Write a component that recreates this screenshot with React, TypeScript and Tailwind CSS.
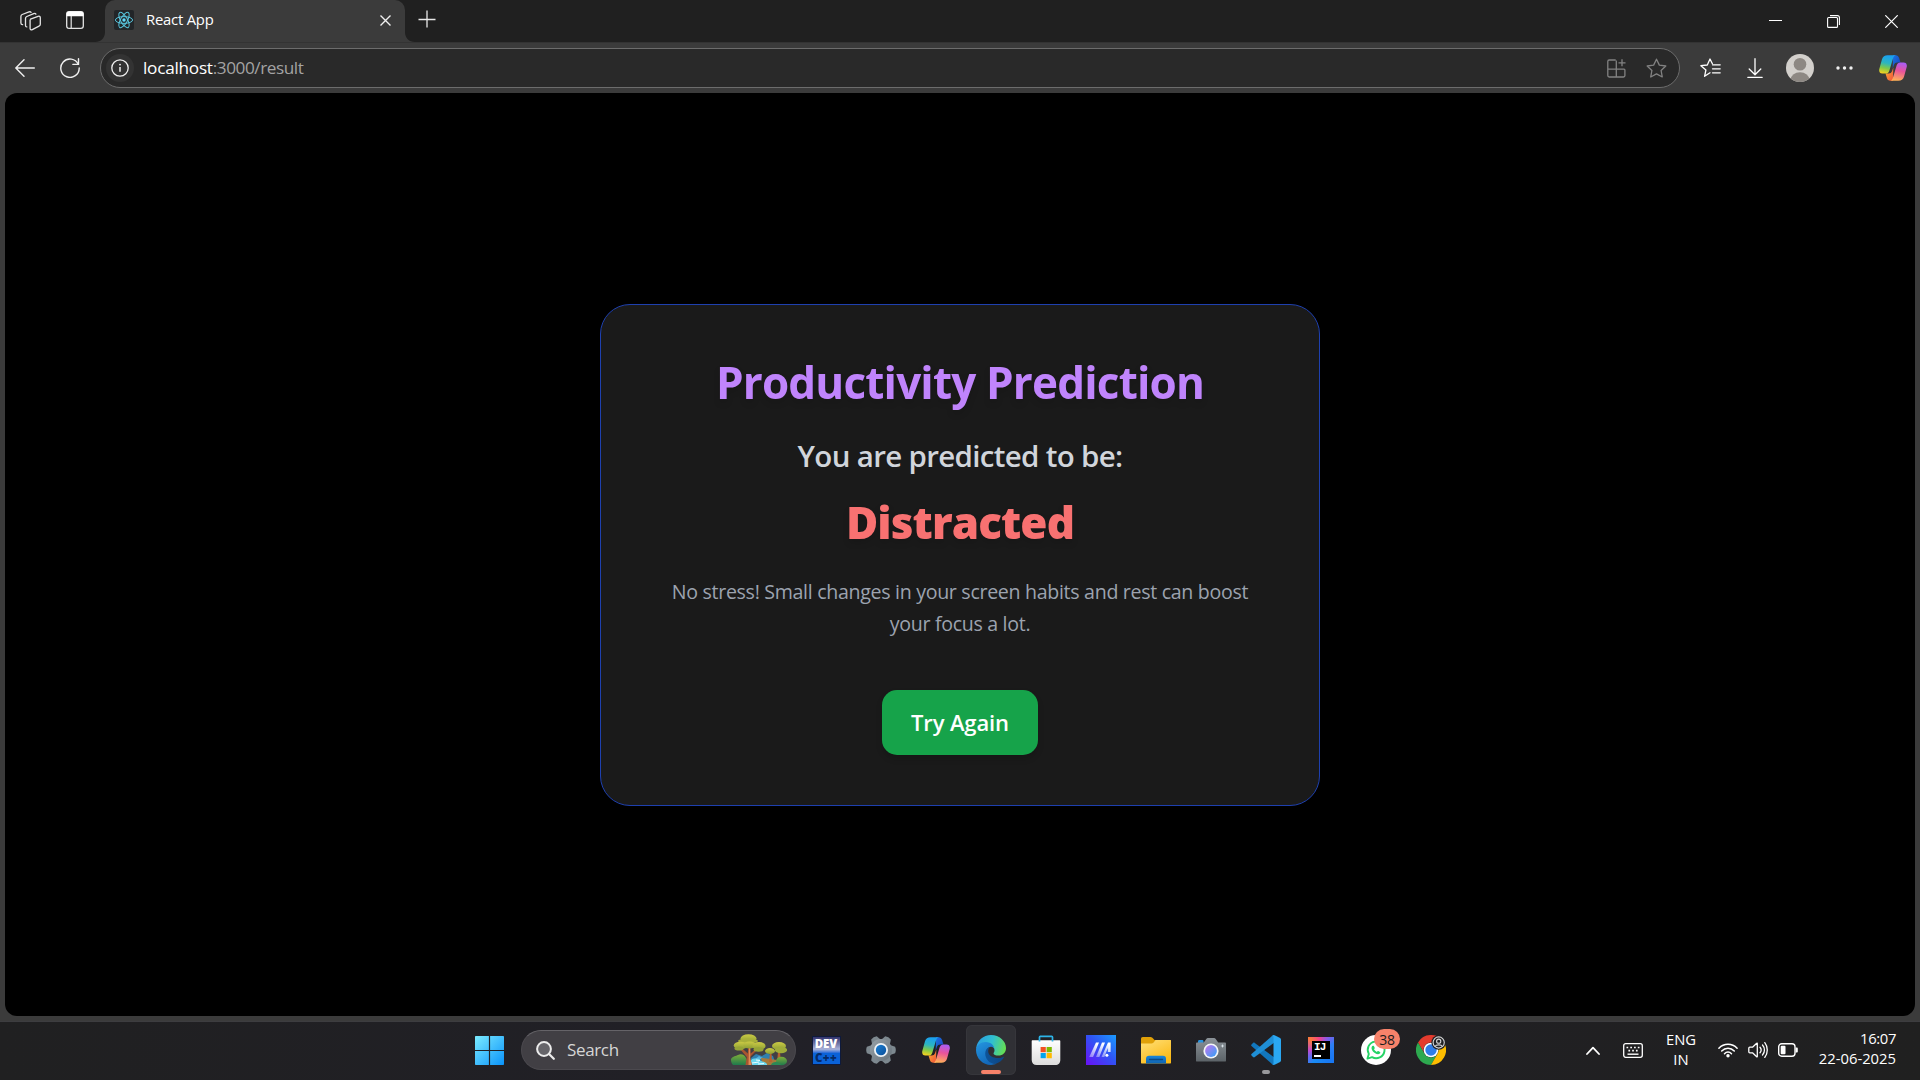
import React, { type ReactNode } from 'react';

/* ---------- Shared logos ---------- */

function CopilotLogo({ id, className }: { id: string; className: string }) {
  return (
    <svg viewBox="0 0 28 26" className={className}>
      <defs>
        <linearGradient id={`${id}-a`} x1="0.4" y1="0" x2="0.2" y2="1">
          <stop offset="0" stopColor="#1aa0f0" />
          <stop offset="0.4" stopColor="#2cb5c0" />
          <stop offset="0.68" stopColor="#7fc94a" />
          <stop offset="1" stopColor="#ffd21c" />
        </linearGradient>
        <linearGradient id={`${id}-b`} x1="0.6" y1="0" x2="0.4" y2="1">
          <stop offset="0" stopColor="#a95cf5" />
          <stop offset="0.45" stopColor="#e9539b" />
          <stop offset="1" stopColor="#ffb257" />
        </linearGradient>
        <linearGradient id={`${id}-c`} x1="0" y1="0" x2="1" y2="1">
          <stop offset="0" stopColor="#1b74e4" />
          <stop offset="1" stopColor="#173fb5" />
        </linearGradient>
        <linearGradient id={`${id}-d`} x1="0" y1="0" x2="1" y2="1">
          <stop offset="0" stopColor="#ffb02e" />
          <stop offset="1" stopColor="#f0523d" />
        </linearGradient>
      </defs>
      <path d="M14 .3h2.6c1.900 0 3 1.100 3.500 2.800l1.400 4.300h-3.200c-1.700 0-2.800.8-3.400 2.500l-1.200 3.600z" fill={`url(#${id}-c)`} />
      <path d="M14 25.700h-2.600c-1.900 0-3-1.100-3.500-2.800l-1.400-4.300h3.200c1.700 0 2.800-.8 3.400-2.500l1.200-3.600z" fill={`url(#${id}-d)`} />
      <path d="M8.600.3h8.200c-1.400.3-2.200 1.400-2.800 3.300l-3.700 12.100c-.6 1.900-1.700 2.900-3.700 2.900H3.400C.9 18.600-.3 16.800.3 14L3 4.200C3.800 1.600 5.700.3 8.600.3z" fill={`url(#${id}-a)`} />
      <path d="M19.400 25.700h-8.200c1.400-.3 2.200-1.400 2.800-3.300l3.700-12.100c.6-1.900 1.700-2.900 3.700-2.900h3.200c2.500 0 3.700 1.800 3.100 4.600L25 21.800c-.8 2.600-2.700 3.900-5.600 3.900z" fill={`url(#${id}-b)`} />
    </svg>
  );
}

/* ---------- Browser chrome ---------- */

function ReactFavicon() {
  return (
    <svg viewBox="0 0 20 20" className="size-5">
      <rect width="20" height="20" rx="2" fill="#222528" />
      <g fill="none" stroke="#58c4dc" strokeWidth="1">
        <ellipse cx="10" cy="10" rx="8.600" ry="3.400" />
        <ellipse cx="10" cy="10" rx="8.600" ry="3.400" transform="rotate(60 10 10)" />
        <ellipse cx="10" cy="10" rx="8.600" ry="3.400" transform="rotate(120 10 10)" />
      </g>
      <circle cx="10" cy="10" r="1.700" fill="#61dafb" />
    </svg>
  );
}

function TabStrip() {
  return (
    <div className="flex h-[42px] items-start bg-[#202020]">
      <svg viewBox="0 0 22 20" className="ml-5 mt-[10.500px] h-5 w-[22px]" fill="none" stroke="#e4e4e4" strokeWidth="1.300" strokeLinejoin="round" strokeLinecap="round">
        <path d="M10.500 8.100 18 5.300c1.300-.5 2.300.1 2.300 1.400v6.600c0 .9-.5 1.600-1.300 1.900l-6.700 3.400c-1.200.6-2.200 0-2.200-1.200V8.900" />
        <path d="M6.800 15.900c-.9 0-1.300-.6-1.300-1.500V7.500c0-.9.500-1.600 1.300-2l6.900-2.900c.9-.4 1.800-.2 2.200.5" />
        <path d="M2.600 13.600C1.400 13.500.9 12.900.9 11.900V5.500c0-.9.5-1.600 1.300-2L9 .9c.9-.3 1.700-.1 2.100.4" />
      </svg>
      <svg viewBox="0 0 18 18" className="ml-6 mt-[11px] size-[18px]">
        <rect x="0.700" y="0.700" width="16.600" height="16.600" rx="2.400" fill="none" stroke="#e4e4e4" strokeWidth="1.300" />
        <path d="M.5 5.200V3C.5 1.500 1.500.5 3 .5h12c1.500 0 2.500 1 2.500 2.500v2.200z" fill="#fff" />
        <path d="M5.200 5v12.300" stroke="#e4e4e4" strokeWidth="1.200" />
      </svg>
      <svg viewBox="0 0 10 10" className="ml-[11px] mt-8 size-2.5">
        <path d="M10 0v10H0C6 10 10 6 10 0z" fill="#3b3b3b" />
      </svg>
      <div className="flex h-[42px] w-[300px] items-start rounded-t-[10px] bg-[#3b3b3b]">
        <div className="ml-[9px] mt-2.5">
          <ReactFavicon />
        </div>
        <span className="ml-[12px] mt-[9px] w-[234px] text-[14.800px] leading-5 tracking-[-0.200px] text-white">React App</span>
        <svg viewBox="0 0 11 11" className="mt-[15px] size-[11px]" stroke="#f0f0f0" strokeWidth="1.400">
          <path d="M.5.500l10 10M10.500.500l-10 10" />
        </svg>
      </div>
      <svg viewBox="0 0 10 10" className="mt-8 size-2.5">
        <path d="M0 0v10h10C4 10 0 6 0 0z" fill="#3b3b3b" />
      </svg>
      <svg viewBox="0 0 18 18" className="ml-[3px] mt-2.5 size-[18px]" stroke="#e8e8e8" strokeWidth="1.300">
        <path d="M9 .5v17M.5 9.500h17" />
      </svg>
      <div className="ml-auto mr-[22px] flex">
        <svg viewBox="0 0 13 13" className="mt-[14px] size-[13px]" stroke="#fff">
          <path d="M0 6.500h13" />
        </svg>
        <svg viewBox="0 0 13 13" className="ml-[45px] mt-[15px] size-[13px]" fill="none" stroke="#fff" strokeWidth="1.100">
          <rect x="0.600" y="2.500" width="9.900" height="9.900" rx="1" />
          <path d="M3 .6h7.400c1.200 0 2 .8 2 2V10" />
        </svg>
        <svg viewBox="0 0 13 13" className="ml-[45px] mt-[15px] size-[13px]" stroke="#fff" strokeWidth="1.200">
          <path d="M.3.300l12.400 12.400M12.700.3.300 12.700" />
        </svg>
      </div>
    </div>
  );
}

const STAR = 'M10.500 1.200l2.850 5.900 6.450.9-4.700 4.500 1.150 6.450-5.750-3.050-5.750 3.050 1.150-6.450L1.200 8l6.450-.9z';

function Toolbar() {
  return (
    <div className="flex h-[51px] items-center bg-[#3b3b3b] shadow-[inset_0_1px_0_#333333]">
      <svg viewBox="0 0 20 18" className="ml-[15px] h-[18px] w-5" fill="none" stroke="#f0f0f0" strokeWidth="1.400" strokeLinecap="round" strokeLinejoin="round">
        <path d="M19.300 9H1M9 .8.800 9 9 17.200" />
      </svg>
      <svg viewBox="0 0 20 20" className="ml-[25px] size-5" fill="none" stroke="#f0f0f0" strokeWidth="1.400" strokeLinecap="round" strokeLinejoin="round">
        <path d="M18.300 6.200A9.200 9.200 0 1 0 19.200 10" />
        <path d="M18.500.8v5.600h-5.600" />
      </svg>
      <div className="ml-5 mt-px flex h-10 w-[1580px] items-center rounded-full border border-[#6c6c6c] bg-[#292929]">
        <div className="ml-[5px] flex size-7 items-center justify-center rounded-full bg-[#333333]">
          <svg viewBox="0 0 18 18" className="size-[18px]" fill="none" stroke="#f0f0f0" strokeWidth="1.300">
            <circle cx="9" cy="9" r="8.200" />
            <path d="M9 8v4.800" strokeWidth="1.500" />
            <circle cx="9" cy="5.600" r="0.950" fill="#f0f0f0" stroke="none" />
          </svg>
        </div>
        <span className="ml-[9px] whitespace-nowrap text-[17.200px] leading-6">
          <span className="tracking-[-0.250px] text-white">localhost</span>
          <span className="tracking-[-0.450px] text-[#a3a3a3]">:3000/result</span>
        </span>
        <svg viewBox="0 0 19 19" className="ml-auto size-[19px]" fill="none" stroke="#828282" strokeWidth="1.300">
          <path d="M8.700 1H2.200C1.300 1 .8 1.500.8 2.400v14.200c0 .9.500 1.400 1.400 1.400h14.300c.9 0 1.400-.5 1.400-1.400V11c0-.5-.4-.9-.9-.9H.8M9.300 17.900V1.600" />
          <path d="M15 .3v7M11.500 3.800h7" />
        </svg>
        <svg viewBox="0 0 21 21" className="ml-5 mr-3 size-[21px]" fill="none" stroke="#828282" strokeWidth="1.300" strokeLinejoin="round">
          <path d={STAR} />
        </svg>
      </div>
      <svg viewBox="0 0 21 20" className="ml-5 mt-px h-5 w-[21px]" fill="none" stroke="#fff" strokeWidth="1.300" strokeLinejoin="round" strokeLinecap="round">
        <path d="M10 14.800l-5.400 3.500 1.300-6.300L.9 7.700l6.400-.7L10 1l2.400 4.800" />
        <path d="M12.500 6.800h7.700M12.500 10.800h7.700M12.500 14.800h7.700" />
      </svg>
      <svg viewBox="0 0 16 20" className="ml-[26px] mt-px h-5 w-4" fill="none" stroke="#fff" strokeWidth="1.300" strokeLinejoin="round" strokeLinecap="round">
        <path d="M8 .7v15.500M2.200 11 8 16.700l5.800-5.700M.8 19.300h14.400" />
      </svg>
      <svg viewBox="0 0 28 28" className="ml-[23px] mt-px size-7">
        <defs>
          <clipPath id="avatar-clip"><circle cx="14" cy="14" r="14" /></clipPath>
        </defs>
        <g clipPath="url(#avatar-clip)">
          <rect width="28" height="28" fill="#d3d0cc" />
          <circle cx="14" cy="10.300" r="6.300" fill="#8d8883" />
          <ellipse cx="14" cy="26" rx="9.500" ry="7.800" fill="#8d8883" />
        </g>
      </svg>
      <svg viewBox="0 0 17 4" className="ml-[22px] mt-px h-1 w-[17px]" fill="#f0f0f0">
        <circle cx="2" cy="2" r="1.700" />
        <circle cx="8.500" cy="2" r="1.700" />
        <circle cx="15" cy="2" r="1.700" />
      </svg>
      <CopilotLogo id="toolbar-copilot" className="ml-[25.500px] mt-px h-[26px] w-7" />
    </div>
  );
}

/* ---------- Result page ---------- */

function ResultCard() {
  return (
    <main className="flex h-[502px] w-[720px] flex-col items-center rounded-[30px] border border-[#1e40af] bg-[#1a1a1a] pt-[52px] text-center">
      <h1 className="text-[44px] font-bold leading-[50px] tracking-[-0.820px] text-[#c084fc] drop-shadow-[0_4px_3px_rgba(0,0,0,0.12)]">
        Productivity Prediction
      </h1>
      <p className="mt-[29px] text-[29.500px] font-semibold leading-10 tracking-[-0.680px] text-[#d1d5db]">You are predicted to be:</p>
      <p className="mt-[21px] text-[44px] font-extrabold leading-[50px] tracking-[-0.900px] text-[#f87171] drop-shadow-[0_4px_3px_rgba(0,0,0,0.12)]">
        Distracted
      </p>
      <p className="mt-[29px] w-[620px] text-[19.600px] leading-8 tracking-[-0.310px] text-[#9ca3af]">
        No stress! Small changes in your screen habits and rest can boost
        <br />
        your focus a lot.
      </p>
      <button className="mt-[50px] h-[65px] w-[156px] rounded-[15px] bg-[#16a34a] text-[22px] font-semibold tracking-[-0.130px] text-white shadow-[0_4px_6px_rgba(0,0,0,0.15)]">
        Try Again
      </button>
    </main>
  );
}

/* ---------- Taskbar icons ---------- */

function TreesArt() {
  return (
    <svg viewBox="0 0 56 32" className="h-8 w-14">
      <defs>
        <linearGradient id="leaf" x1="0" y1="0" x2="0" y2="1">
          <stop offset="0" stopColor="#cbca44" />
          <stop offset="1" stopColor="#8d9f35" />
        </linearGradient>
        <linearGradient id="bush" x1="0" y1="0" x2="0" y2="1">
          <stop offset="0" stopColor="#7fae3a" />
          <stop offset="1" stopColor="#1f7a4c" />
        </linearGradient>
      </defs>
      <path d="M20 24l5-4 6 2 5-3 6 3 2 6H20z" fill="#2f7fae" />
      <path d="M24 25l4-3 6 3z" fill="#56b0dc" />
      <path d="M30 24c6 0 14 2 24 3l-4 4H32z" fill="#a4793b" />
      <path d="M0 25c2-3 5-3 7-4 3-2 7 0 8 3l3 7H2c-2-2-2-4-2-6z" fill="url(#bush)" />
      <path d="M17 31l4-6c5-1 9 0 8 1-2 1 8 2 7 5z" fill="#6cd8ee" />
      <path d="M21 29l7-1M25 26l4 .5M27 30l6-.5" stroke="#e8fbff" strokeWidth="1" />
      <path d="M14.500 31l1.300-8-6-7 2-1 5 4.500.5-8h2l.2 8 5-4 1 1-6.500 6.500 2 8z" fill="#a9552f" />
      <path d="M17.500 31l.5-18h1.200v11l1 7z" fill="#e08a55" />
      <ellipse cx="17.500" cy="4.500" rx="8" ry="4.300" fill="url(#leaf)" />
      <ellipse cx="17" cy="7" rx="10" ry="2.600" fill="#a8b03a" />
      <ellipse cx="9.500" cy="11.500" rx="6.800" ry="3.800" fill="url(#leaf)" />
      <ellipse cx="18.500" cy="11" rx="6.500" ry="3.400" fill="url(#leaf)" />
      <ellipse cx="28" cy="12" rx="6.600" ry="3.900" fill="url(#leaf)" />
      <ellipse cx="8" cy="14.500" rx="4.500" ry="2" fill="#96a437" />
      <ellipse cx="27.500" cy="15.500" rx="5" ry="2.200" fill="#96a437" />
      <path d="M46 29l1-11h2l1 11zM38 28l1-9h1.500l.5 9z" fill="#b5632f" />
      <ellipse cx="48" cy="12" rx="7" ry="4" fill="url(#leaf)" />
      <ellipse cx="50" cy="16" rx="6.200" ry="3.200" fill="#a1ad3a" />
      <ellipse cx="39" cy="17" rx="5" ry="3" fill="url(#leaf)" />
      <ellipse cx="50.500" cy="27" rx="5.500" ry="4.300" fill="url(#bush)" />
      <path d="M40 31c1-3 5-4 8-2l2 2z" fill="#2a8a57" />
    </svg>
  );
}

function DevCppIcon() {
  return (
    <div className="flex size-[29px] flex-col items-center justify-between overflow-hidden border border-[#0e1a3c] bg-linear-to-b from-[#34346e] via-[#a9b2d8] via-45% to-[#0a62d8] to-60% font-extrabold">
      <span className="text-[11.500px] leading-[13px] tracking-[-0.100px] text-white">DEV</span>
      <span className="text-[11.500px] leading-[12px] tracking-[0.300px] text-[#062a66]">C++</span>
    </div>
  );
}

const GEAR_TEETH = [0, 60, 120, 180, 240, 300];

function SettingsIcon() {
  return (
    <svg viewBox="0 0 30 30" className="size-[30px]">
      <defs>
        <linearGradient id="gear" x1="0" y1="0" x2="1" y2="1">
          <stop offset="0" stopColor="#97a1a8" />
          <stop offset="1" stopColor="#67727a" />
        </linearGradient>
        <linearGradient id="gear-core" x1="0" y1="0" x2="1" y2="1">
          <stop offset="0" stopColor="#1b80d4" />
          <stop offset="1" stopColor="#0b4f9a" />
        </linearGradient>
      </defs>
      <g fill="#7d888f">
        {GEAR_TEETH.map((a) => (
          <path key={a} d="M10 6 11.800.9Q15-.5 18.200.9L20 6z" transform={`rotate(${a + 30} 15 15)`} />
        ))}
      </g>
      <circle cx="15" cy="15" r="11" fill="url(#gear)" />
      <circle cx="15" cy="15" r="7" fill="#eef3f7" />
      <circle cx="15" cy="15" r="5.200" fill="url(#gear-core)" />
    </svg>
  );
}

function EdgeIcon() {
  return (
    <svg viewBox="0 0 30 30" className="size-[30px]">
      <defs>
        <linearGradient id="edge-top" x1="0" y1="0.400" x2="1" y2="0.600">
          <stop offset="0" stopColor="#2a9fe0" />
          <stop offset="0.500" stopColor="#30bfd0" />
          <stop offset="1" stopColor="#67e04f" />
        </linearGradient>
        <linearGradient id="edge-left" x1="0" y1="0" x2="0.500" y2="1">
          <stop offset="0" stopColor="#2496e0" />
          <stop offset="1" stopColor="#1267b8" />
        </linearGradient>
        <linearGradient id="edge-low" x1="0" y1="0" x2="1" y2="0">
          <stop offset="0" stopColor="#0d5499" />
          <stop offset="1" stopColor="#0c4584" />
        </linearGradient>
      </defs>
      <path d="M.2 13.500C1 5.500 7.200 0 15 0c8.500 0 15 6.200 15 13 0 4.600-3.400 7.600-7.500 7.600-3 0-5-1-5-2.200 0-.8 1-1.300 1-3.200 0-2.700-2.600-5-6.300-5C7.200 10.200 2 11.500.2 13.500z" fill="url(#edge-top)" />
      <path d="M0 15c0-4.700 4.600-8 9.800-8 5.200 0 8.700 3.600 8.700 8 0-2.300-2-3.300-3.500-3.300-2.800 0-4.600 2.800-4.600 6 0 6.500 5.200 11.300 10 10.900C18.700 29.600 17 30 15 30 6.700 30 0 23.300 0 15z" fill="url(#edge-left)" />
      <path d="M13.600 12c-2.700 1-4.400 3-4.400 6.600 0 6 5 11.200 11.200 10 3-1 5.800-3.300 7.400-6 .3-.6-.2-1-.8-.7-5.500 2.700-13.800.5-14.700-4.600-.3-2 .3-4 1.300-5.300z" fill="url(#edge-low)" />
    </svg>
  );
}

function StoreIcon() {
  return (
    <svg viewBox="0 0 30 30" className="size-[30px]">
      <defs>
        <linearGradient id="bag" x1="0" y1="0" x2="0" y2="1">
          <stop offset="0" stopColor="#ffffff" />
          <stop offset="1" stopColor="#dcdcdc" />
        </linearGradient>
      </defs>
      <path d="M.7 6.200c0-.7.300-1 1-1h26.600c.7 0 1 .3 1 1V25c0 3-1.900 5-5 5H5.700c-3.100 0-5-2-5-5z" fill="url(#bag)" />
      <path d="M8.500 6.500V2.200c0-.5.300-.8.800-.8h11.400c.5 0 .8.300.8.800v4.300" fill="none" stroke="#2db4e8" strokeWidth="1.700" />
      <path d="M9.600 12h5.200v5.200H9.600z" fill="#f25022" />
      <path d="M15.600 12h5.200v5.200h-5.200z" fill="#7fba00" />
      <path d="M9.600 18h5.200v5.200H9.600z" fill="#00a4ef" />
      <path d="M15.600 18h5.200v5.200h-5.200z" fill="#ffb900" />
    </svg>
  );
}

function ArmouryIcon() {
  return (
    <svg viewBox="0 0 30 30" className="size-[30px]">
      <defs>
        <linearGradient id="ma" x1="1" y1="0" x2="0" y2="1">
          <stop offset="0" stopColor="#1a9cff" />
          <stop offset="0.450" stopColor="#2f55f5" />
          <stop offset="1" stopColor="#6a10f5" />
        </linearGradient>
        <linearGradient id="ma-fade" x1="0" y1="1" x2="0.600" y2="0">
          <stop offset="0" stopColor="#fff" stopOpacity="0.350" />
          <stop offset="1" stopColor="#fff" />
        </linearGradient>
      </defs>
      <rect width="30" height="30" fill="url(#ma)" />
      <path d="M3.200 22 10 7.500h3L7 22z" fill="url(#ma-fade)" />
      <path d="M10 22l6-14.500h3L13.300 22z" fill="url(#ma-fade)" />
      <path d="M15.500 22 22 7.500h2.600v9.500h-2.800v-4L18.300 22z" fill="url(#ma-fade)" />
      <circle cx="20.900" cy="20.300" r="1.500" fill="#fff" />
    </svg>
  );
}

function ExplorerIcon() {
  return (
    <svg viewBox="0 0 30 30" className="size-[30px]">
      <defs>
        <linearGradient id="folder" x1="0" y1="0" x2="0.600" y2="1">
          <stop offset="0" stopColor="#ffe07a" />
          <stop offset="1" stopColor="#fbba16" />
        </linearGradient>
        <linearGradient id="tray" x1="0" y1="0" x2="0" y2="1">
          <stop offset="0" stopColor="#1a86d9" />
          <stop offset="1" stopColor="#0f63b0" />
        </linearGradient>
      </defs>
      <path d="M0 4c0-1.300.6-2 1.800-2h7.600c.8 0 1.400.2 2 .8L13.500 5H29c.7 0 1 .4 1 1v5H0z" fill="#e0a008" />
      <path d="M0 8.500h10.500c.8 0 1.300-.2 1.900-.8L14.600 5H29c.7 0 1 .4 1 1v21.500c0 .7-.3 1.100-1 1.100H1c-.7 0-1-.4-1-1.100z" fill="url(#folder)" />
      <path d="M5 24c0-2 1-3.200 3-3.200h14c2 0 3 1.200 3 3.200v4.600H5z" fill="url(#tray)" />
      <path d="M8.500 24.500h13" stroke="#0b4a86" strokeWidth="1.400" strokeLinecap="round" />
    </svg>
  );
}

function CameraIcon() {
  return (
    <svg viewBox="0 0 30 30" className="size-[30px]">
      <defs>
        <linearGradient id="cam-body" x1="0" y1="0" x2="0" y2="1">
          <stop offset="0" stopColor="#8b9298" />
          <stop offset="1" stopColor="#5c6368" />
        </linearGradient>
        <linearGradient id="cam-lens" x1="0" y1="0" x2="1" y2="1">
          <stop offset="0.150" stopColor="#b07cf0" />
          <stop offset="0.900" stopColor="#3f9cf5" />
        </linearGradient>
      </defs>
      <path d="M2 8.500V6.500C2 5.500 2.600 5 3.500 5H6c1 0 1.500.5 1.500 1.500v2z" fill="#2793e0" />
      <path d="M1.200 7.500h6.600l2.500-3.600c.4-.6.900-.9 1.700-.9h6c.8 0 1.300.3 1.700.9l2.500 3.600h6.600c.8 0 1.200.4 1.200 1.200v16.700c0 .8-.4 1.200-1.200 1.200H1.200C.4 26.600 0 26.200 0 25.400V8.700c0-.8.4-1.200 1.200-1.200z" fill="url(#cam-body)" />
      <circle cx="15" cy="16" r="7.600" fill="#f3f5f7" />
      <circle cx="15" cy="16" r="5.900" fill="url(#cam-lens)" />
      <path d="M26.500 9l.6 1.400 1.400.6-1.400.6-.6 1.400-.6-1.400-1.400-.6 1.400-.6z" fill="#dbe4ea" />
    </svg>
  );
}

function VSCodeIcon() {
  return (
    <svg viewBox="0 0 30 30" className="size-[30px]">
      <path d="M.5 9.400 2 8c.6-.5 1.200-.5 1.800-.1L23 22.300V30c-.7 0-1.200-.3-1.800-.8L.5 10.900c-.5-.5-.5-1 0-1.500z" fill="#1277bd" />
      <path d="M.5 20.600 2 22c.6.5 1.200.5 1.800.1L23 7.700V0c-.7 0-1.200.3-1.800.8L.5 19.100c-.5.500-.5 1 0 1.500z" fill="#1f8fd6" />
      <path d="M22 29.700c-.5-.2-.9-.5-1.200-.9.900.9 1.700.3 1.700-.9V2.100c0-1.200-.8-1.800-1.700-.9.300-.4.7-.7 1.200-.9.500-.2 1.100-.2 1.600 0l5.500 2.700c.6.300.9.900.9 1.500v21c0 .6-.3 1.200-.9 1.500l-5.500 2.700c-.5.200-1.100.2-1.600 0z" fill="#2aa7f2" />
    </svg>
  );
}

function IntelliJIcon() {
  return (
    <div className="flex size-[26px] items-center justify-center bg-[conic-gradient(from_315deg,#fb7a3a,#f5408c_10%,#8a5ae8_20%,#2d7ff5_30%,#1877f2_50%,#1a8cf5_72%,#5b6cf0_78%,#c04ad0_87%,#fb7a3a)]">
      <div className="flex size-[18px] flex-col bg-black pl-[2px]">
        <span className="mt-px font-['Liberation_Mono'] text-[11px] font-bold leading-[11px] tracking-[-0.800px] text-white">IJ</span>
        <span className="mt-[2px] h-[1.500px] w-[7px] bg-white" />
      </div>
    </div>
  );
}

function WhatsAppIcon() {
  return (
    <div className="relative size-[30px]">
      <svg viewBox="0 0 30 30" className="size-[30px]">
        <circle cx="15" cy="15" r="15" fill="#fff" />
        <path d="M6.500 23.600l1.300-4.700a8.400 8.400 0 1 1 3.300 3.300z" fill="none" stroke="#25d366" strokeWidth="1.900" strokeLinejoin="round" />
        <path d="M11.300 11.100c.5-.6 1.300-.6 1.600 0l.8 1.700c.2.400-.1.900-.7 1.500.6 1.200 1.500 2 2.800 2.600.7-.8 1-1 1.500-.8l1.700.8c.5.300.4 1.100-.2 1.700-1.100 1.100-2.900.9-5-.5-2.700-1.900-4.300-5-2.500-7z" fill="#25d366" />
      </svg>
      <span className="absolute left-[13px] top-[-6px] flex h-5 w-[26px] items-center justify-center rounded-full bg-[#f7826a] text-[14px] tracking-[-0.200px] text-[#1b1b1b]">38</span>
    </div>
  );
}

function ChromeIcon() {
  return (
    <svg viewBox="0 0 30 30" className="size-[30px]">
      <path d="M2 7.500A15 15 0 0 1 28 7.500H15a7.500 7.500 0 0 0-6.500 11.250z" fill="#e33b2e" />
      <path d="M2 7.500A15 15 0 0 0 15 30l6.500-11.250a7.500 7.500 0 0 1-13 0z" fill="#2da94f" />
      <path d="M28 7.500A15 15 0 0 1 15 30l6.500-11.250A7.500 7.500 0 0 0 15 7.500z" fill="#fdbd00" />
      <circle cx="15" cy="15" r="7.300" fill="#fff" />
      <circle cx="15" cy="15" r="5.700" fill="#2f7de9" />
      <circle cx="22.700" cy="7.500" r="7.300" fill="#202124" />
      <g fill="none" stroke="#d5d5d5" strokeWidth="1.100">
        <circle cx="22.700" cy="7.500" r="5.600" />
        <circle cx="22.700" cy="6.200" r="2.100" />
        <path d="M19 11.500c1-2.200 6.400-2.200 7.400 0" />
      </g>
    </svg>
  );
}

/* ---------- Taskbar ---------- */

function Slot({ children, active, running }: { children: ReactNode; active?: boolean; running?: boolean }) {
  return (
    <div className="flex w-[55px] justify-center">
      <div
        className={
          active
            ? 'relative flex size-[50px] items-center justify-center rounded-md bg-[#303035] shadow-[inset_0_0_0_1px_#36363b]'
            : 'relative flex size-[50px] items-center justify-center'
        }
      >
        {children}
        {active && <span className="absolute bottom-px h-1 w-5 rounded-full bg-[#f7826a]" />}
        {running && <span className="absolute bottom-px h-1 w-2 rounded-full bg-[#98989b]" />}
      </div>
    </div>
  );
}

function Tray() {
  return (
    <div className="ml-auto mr-[24px] flex items-center text-[14.800px] leading-5 text-white">
      <svg viewBox="0 0 14 9" className="h-[9px] w-[14px]" fill="none" stroke="#fff" strokeWidth="1.800" strokeLinecap="round" strokeLinejoin="round">
        <path d="M1 8l6-6.300L13 8" />
      </svg>
      <svg viewBox="0 0 20 15" className="ml-[23px] h-[15px] w-5">
        <rect x="0.700" y="0.700" width="18.600" height="13.600" rx="2" fill="none" stroke="#fff" strokeWidth="1.300" />
        <path d="M3.500 4.500h13" stroke="#fff" strokeWidth="1.700" strokeDasharray="1.700 2.070" />
        <path d="M5.400 7.700h9.600" stroke="#fff" strokeWidth="1.700" strokeDasharray="1.700 2.070" />
        <path d="M4.500 11.200h11" stroke="#fff" strokeWidth="1.400" />
      </svg>
      <div className="mb-0.5 ml-[23px] flex w-[30px] flex-col items-center">
        <span>ENG</span>
        <span>IN</span>
      </div>
      <svg viewBox="0 0 20 16" className="ml-[22px] h-4 w-5" fill="none" stroke="#fff" strokeWidth="1.500" strokeLinecap="round">
        <path d="M.9 6.300c5-5.300 13.200-5.300 18.200 0" />
        <path d="M3.700 9c3.500-3.700 9.100-3.700 12.600 0" />
        <path d="M6.500 11.700c2-2.200 5-2.200 7 0" />
        <circle cx="10" cy="13.800" r="1.700" fill="#fff" stroke="none" />
      </svg>
      <svg viewBox="0 0 20 18" className="ml-2.5 h-[18px] w-5" fill="none" stroke="#fff" strokeWidth="1.300" strokeLinecap="round" strokeLinejoin="round">
        <path d="M1.800 6.200h2.700l4.200-3.900c.3-.3.600-.1.600.3v12.800c0 .4-.3.600-.6.300l-4.200-3.900H1.800c-.6 0-1-.4-1-1V7.200c0-.6.4-1 1-1z" />
        <path d="M12 6.300c1.300 1.500 1.300 3.900 0 5.400M14.500 4c2.600 2.900 2.600 7.100 0 10M16.800 1.600c3.300 4.200 3.300 10.600 0 14.800" />
      </svg>
      <svg viewBox="0 0 20 14" className="ml-2.5 h-[14px] w-5">
        <rect x="0.700" y="0.800" width="16.300" height="12.400" rx="3" fill="none" stroke="#fff" strokeWidth="1.400" />
        <rect x="2.700" y="2.800" width="4.800" height="8.400" rx="1" fill="#fff" />
        <path d="M17.600 4.500h1c.8 0 1.200.4 1.200 1.200v2.600c0 .8-.4 1.200-1.200 1.200h-1z" fill="#fff" />
      </svg>
      <div className="mb-1 ml-5 flex w-[78px] flex-col items-end">
        <span className="tracking-[-0.350px]">16:07</span>
        <span>22-06-2025</span>
      </div>
    </div>
  );
}

function Taskbar() {
  return (
    <footer className="flex h-[59px] items-center border-t border-[#3d3d40] bg-linear-to-r from-[#202021] via-[#212027] via-40% to-[#202020] pb-0.5">
      <svg viewBox="0 0 29 29" className="ml-[475px] size-[29px]">
        <defs>
          <linearGradient id="win" x1="0" y1="0" x2="1" y2="1">
            <stop offset="0" stopColor="#7bebff" />
            <stop offset="1" stopColor="#0a93fa" />
          </linearGradient>
        </defs>
        <path d="M0 .8Q0 0 .8 0H13.900v13.900H0zM15.100 0h13.100q.8 0 .8.8v13.100H15.100zM0 15.100h13.900V29H.8Q0 29 0 28.200zM15.100 15.100H29v13.100q0 .8-.8.8H15.100z" fill="url(#win)" />
      </svg>
      <div className="ml-[17px] flex h-10 w-[275px] items-center rounded-full border border-[#4b494e] border-t-[#656368] bg-[#413f44]">
        <svg viewBox="0 0 19 19" className="ml-[14px] size-[19px]" fill="none" stroke="#ececec" strokeWidth="2">
          <circle cx="8" cy="8" r="6.900" fill="#66656a" />
          <path d="M13 13l4.800 4.800" strokeLinecap="round" strokeWidth="2.200" />
        </svg>
        <span className="ml-[12px] text-[17px] leading-6 tracking-[-0.350px] text-[#d6d6d6]">Search</span>
        <div className="ml-auto mr-2">
          <TreesArt />
        </div>
      </div>
      <div className="ml-[2.500px] flex">
        <Slot><DevCppIcon /></Slot>
        <Slot><SettingsIcon /></Slot>
        <Slot><CopilotLogo id="taskbar-copilot" className="h-[26px] w-7" /></Slot>
        <Slot active><EdgeIcon /></Slot>
        <Slot><StoreIcon /></Slot>
        <Slot><ArmouryIcon /></Slot>
        <Slot><ExplorerIcon /></Slot>
        <Slot><CameraIcon /></Slot>
        <Slot running><VSCodeIcon /></Slot>
        <Slot><IntelliJIcon /></Slot>
        <Slot><WhatsAppIcon /></Slot>
        <Slot><ChromeIcon /></Slot>
      </div>
      <Tray />
    </footer>
  );
}

export default function App() {
  return (
    <div className="flex h-[1080px] w-[1920px] flex-col overflow-hidden bg-[#3b3b3b] font-['Open_Sans','Noto_Sans',sans-serif]">
      <TabStrip />
      <Toolbar />
      <div className="mx-[5px] mb-[5px] flex h-[923px] items-center justify-center rounded-xl bg-black">
        <ResultCard />
      </div>
      <Taskbar />
    </div>
  );
}
